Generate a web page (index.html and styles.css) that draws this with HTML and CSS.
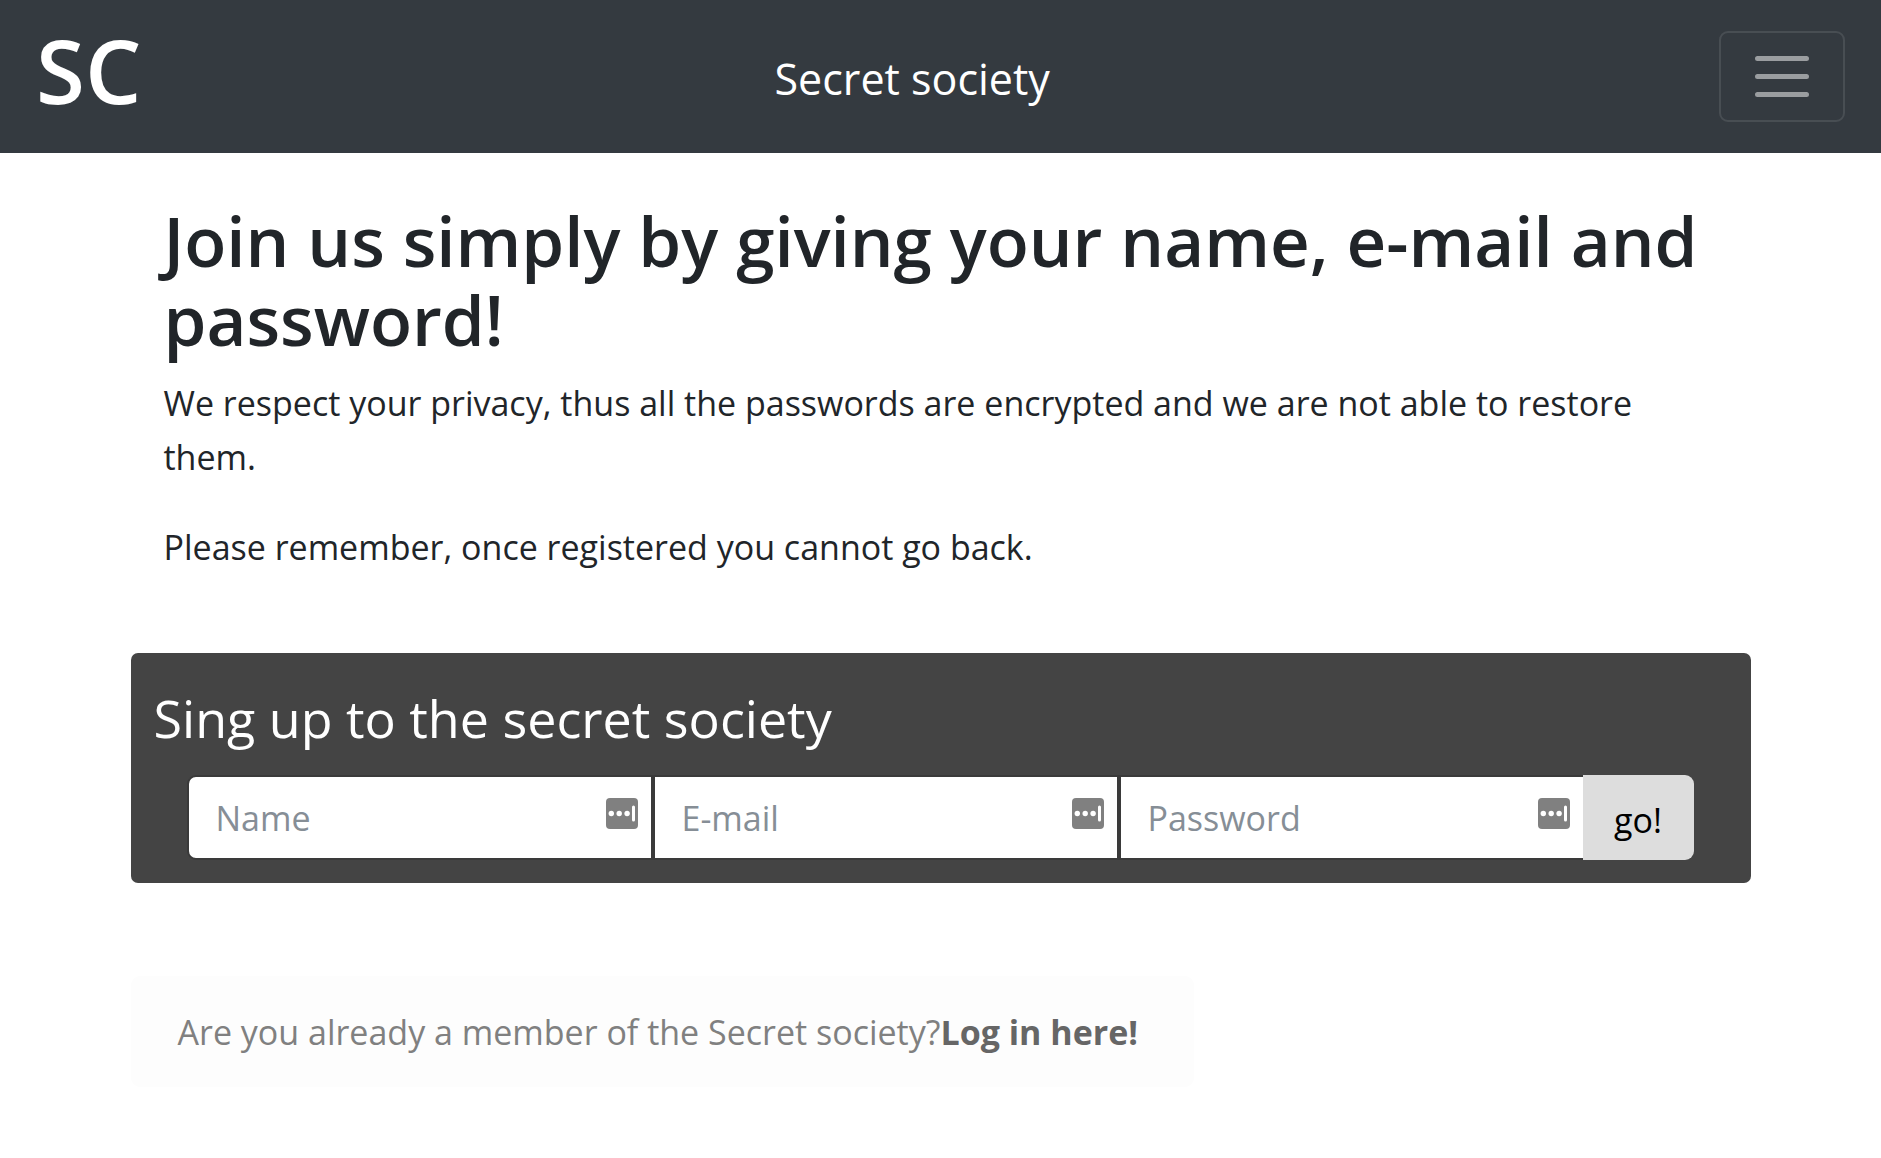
FILE: index.html
```html
<!DOCTYPE html>
<html lang="en">
<head>
<meta charset="utf-8">
<meta name="viewport" content="width=device-width, initial-scale=1">
<title>Secret society</title>
<link rel="stylesheet" href="styles.css">
</head>
<body>
<nav class="navbar">
  <a class="brand" href="#">SC</a>
  <span class="site-name">Secret society</span>
  <button class="toggler" type="button" aria-label="Toggle navigation">
    <svg viewBox="0 0 54 41" width="54" height="41" aria-hidden="true"><path d="M2.5 2.5h49M2.5 20.5h49M2.5 38.5h49"/></svg>
  </button>
</nav>
<main class="container">
  <section class="intro">
    <h1>Join us simply by giving your name, e-mail and password!</h1>
    <p>We respect your privacy, thus all the passwords are encrypted and we are not able to restore them.</p>
    <p>Please remember, once registered you cannot go back.</p>
  </section>
  <form class="signup">
    <h2>Sing up to the secret society</h2>
    <div class="fields">
      <label class="field">
        <input type="text" placeholder="Name" aria-label="Name">
        <svg class="key" viewBox="0 0 32 31" aria-hidden="true"><rect width="32" height="31" rx="4"/><circle cx="5.3" cy="15.5" r="2.7"/><circle cx="13.2" cy="15.5" r="2.7"/><circle cx="21.1" cy="15.5" r="2.7"/><path d="M27.5 9v13"/></svg>
      </label>
      <label class="field">
        <input type="email" placeholder="E-mail" aria-label="E-mail">
        <svg class="key" viewBox="0 0 32 31" aria-hidden="true"><rect width="32" height="31" rx="4"/><circle cx="5.3" cy="15.5" r="2.7"/><circle cx="13.2" cy="15.5" r="2.7"/><circle cx="21.1" cy="15.5" r="2.7"/><path d="M27.5 9v13"/></svg>
      </label>
      <label class="field">
        <input type="password" placeholder="Password" aria-label="Password">
        <svg class="key" viewBox="0 0 32 31" aria-hidden="true"><rect width="32" height="31" rx="4"/><circle cx="5.3" cy="15.5" r="2.7"/><circle cx="13.2" cy="15.5" r="2.7"/><circle cx="21.1" cy="15.5" r="2.7"/><path d="M27.5 9v13"/></svg>
      </label>
      <button class="go" type="submit">go!</button>
    </div>
  </form>
  <p class="login">Are you already a member of the Secret society?<a href="#">Log in here!</a></p>
</main>
</body>
</html>
```

FILE: styles.css
```css
* {
  box-sizing: border-box;
}

body {
  margin: 0;
  background: #fff;
  color: #212529;
  font: 34px/54px "Segoe UI", "Open Sans", sans-serif;
}

.navbar {
  display: flex;
  align-items: center;
  justify-content: space-between;
  min-height: 153px;
  padding: 16px 36px;
  background: #343a40;
  color: #fff;
}

.brand {
  padding-bottom: 14px;
  color: inherit;
  font-size: 89px;
  font-weight: 600;
  line-height: 96px;
  text-decoration: none;
}

.site-name {
  margin-right: 36px;
  padding-top: 4px;
  font-size: 43px;
}

.toggler {
  display: flex;
  align-items: center;
  justify-content: center;
  width: 126px;
  height: 91px;
  padding: 0;
  border: 2px solid rgba(255, 255, 255, 0.1);
  border-radius: 9px;
  background: none;
}

.toggler path {
  stroke: rgba(255, 255, 255, 0.5);
  stroke-width: 5;
  stroke-linecap: round;
}

.container {
  max-width: 1620px;
  margin: 0 auto;
}

.intro {
  padding: 48px 33px 0;
}

h1 {
  margin: 0 0 17px;
  font-size: 69px;
  font-weight: 600;
  line-height: 79px;
}

.intro p {
  margin: 0 0 36px;
}

.signup {
  margin-top: 79px;
  padding: 32px 57px 23px 56px;
  border-radius: 7px;
  background: #444;
}

h2 {
  margin: 0 0 24px -33px;
  color: #fff;
  font-size: 52px;
  font-weight: 400;
  line-height: 66px;
}

.fields {
  display: flex;
}

.field {
  position: relative;
  flex: 1;
  display: flex;
}

.field input {
  width: 100%;
  height: 85px;
  padding: 0 80px 0 27px;
  border: 2px solid #3a3a3a;
  border-radius: 0;
  background: #fff;
  color: #495057;
  font: inherit;
}

.field:first-child input {
  border-radius: 9px 0 0 9px;
}

.field input::placeholder {
  color: #868e96;
  opacity: 1;
}

.key {
  position: absolute;
  top: 23px;
  right: 15px;
  width: 32px;
  height: 31px;
  fill: #808080;
}

.key circle {
  fill: #fff;
}

.key path {
  stroke: #fff;
  stroke-width: 3;
  stroke-linecap: round;
}

.go {
  width: 111px;
  margin-left: -2px;
  padding: 4px 0 0;
  border: 0;
  border-radius: 0 9px 9px 0;
  background: #ddd;
  color: #000;
  font: inherit;
  z-index: 1;
}

.login {
  width: fit-content;
  margin: 93px 0 0;
  padding: 29px 56px 28px 47px;
  border-radius: 9px;
  background: #fdfdfd;
  color: #808080;
}

.login a {
  color: #666;
  font-weight: 700;
  text-decoration: none;
}
```
